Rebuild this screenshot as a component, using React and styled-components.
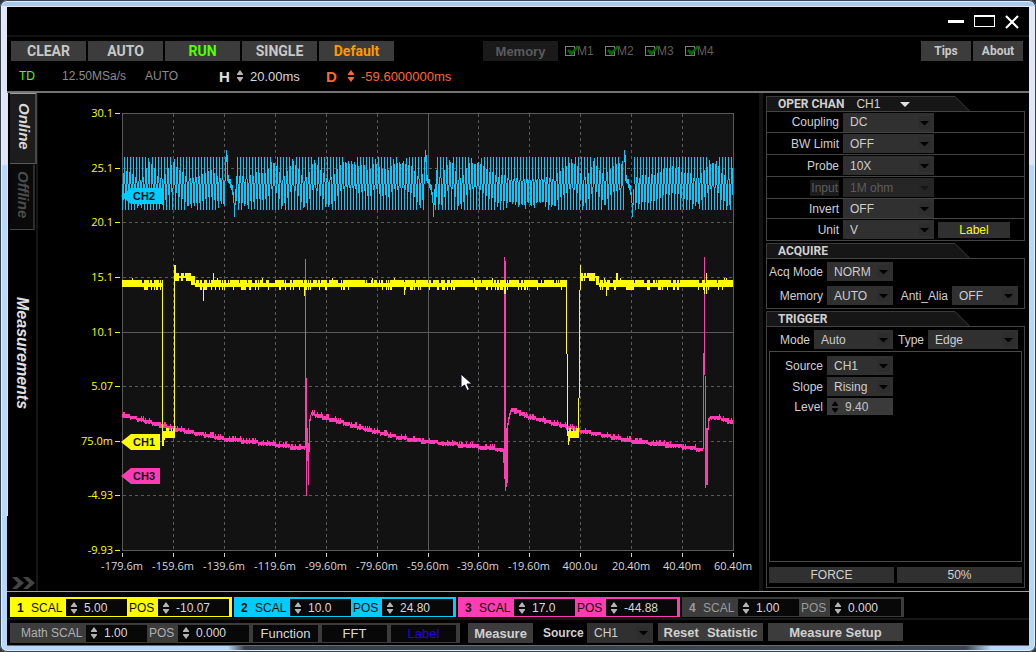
// App.jsx
import React, { useId } from "react";
import styled, { createGlobalStyle } from "styled-components";

const YELLOW = "#ffff00";
const CYAN = "#00ccff";
const PINK = "#ff3cb4";

/* ---------- waveform data ---------- */

const makeRandom = (seed) => {
  let s = seed;
  return () => {
    s = (s * 16807) % 2147483647;
    return s / 2147483647;
  };
};

// every column is [x, top, bottom] in plot pixels
const toPath = (columns) =>
  columns.map(([x, a, b]) => `M${x} ${a}h1V${b}h-1z`).join("");

const buildCh2 = () => {
  const rand = makeRandom(13);
  const glitch = [
    [37, 49],
    [42, 68],
    [62, 70],
    [66, 71],
    [66, 75],
    [71, 77],
    [72, 82],
    [79, 90],
    [90, 104],
    [76, 92],
  ];
  // one sample per column, joined at the midpoints between neighbours
  const samples = [];
  let phase = 0;
  for (let x = 0; x < 613; x++) {
    phase += (2 * Math.PI) / (3.07 + 0.09 * Math.sin(x / 23)) + (rand() - 0.5) * 0.22;
    const v = Math.max(-1, Math.min(1, 1.5 * Math.sin(phase)));
    samples.push(70.5 - v * 26.5);
  }
  const columns = [];
  for (let x = 0; x < 611; x++) {
    const start = [104, 303, 502].find((g) => x >= g && x < g + glitch.length);
    if (start !== undefined) {
      columns.push([x, ...glitch[x - start]]);
      continue;
    }
    const cur = samples[x + 1];
    const before = (samples[x] + cur) / 2;
    const after = (samples[x + 2] + cur) / 2;
    const top = Math.round(Math.min(cur, before, after));
    const bottom = Math.round(Math.max(cur, before, after));
    columns.push([x, top, Math.max(bottom, top + 4)]);
  }
  return toPath(columns);
};

const buildCh1 = () => {
  const rand = makeRandom(71);
  const fixed = {
    40: [167, 333],
    41: [318, 333],
    42: [318, 327],
    52: [152, 325],
    53: [152, 168],
    81: [170, 188],
    91: [160, 174],
    182: [167, 183],
    282: [169, 182],
    382: [167, 181],
    383: [167, 181],
    444: [167, 241],
    445: [241, 323],
    446: [318, 332],
    447: [315, 328],
    456: [285, 325],
    457: [177, 285],
    458: [152, 177],
    484: [169, 183],
    494: [160, 174],
    495: [160, 174],
    582: [167, 181],
    584: [160, 181],
  };
  const columns = [];
  let noisy = true;
  for (let x = 0; x < 611; x++) {
    if (x % 9 === 0) noisy = rand() > 0.5;
    const r = rand();
    if (fixed[x]) {
      columns.push([x, ...fixed[x]]);
    } else if ((x > 42 && x < 52) || (x > 447 && x < 456)) {
      columns.push([x, r > 0.6 ? 315 : 318, r > 0.3 ? 325 : 323]);
    } else if ((x > 53 && x < 69) || (x > 458 && x < 474)) {
      columns.push([x, r > 0.25 ? 160 : 163, r > 0.35 ? 168 : 165]);
    } else if ((x >= 69 && x < 73) || (x >= 474 && x < 477)) {
      columns.push([x, 163, 172]);
    } else if (noisy && r < 0.35) {
      columns.push([x, 170, 174]);
    } else if (noisy && r < 0.6) {
      columns.push([x, 167, 177]);
    } else if (r > 0.97) {
      columns.push([x, 165, 174]);
    } else {
      columns.push([x, 167, r > 0.9 ? 177 : 174]);
    }
  }
  return toPath(columns);
};

const buildCh3 = () => {
  const rand = makeRandom(29);
  const ramps = [
    [[0, 301], [51, 315], [102, 325], [153, 331], [183, 335]],
    [[189, 300], [200, 303], [238, 314], [278, 324], [306, 328], [356, 333], [381, 336]],
    [[389, 296], [394, 298], [406, 303], [444, 313], [458, 317], [509, 327], [560, 333], [581, 336]],
    [[588, 303], [596, 304], [611, 309]],
  ];
  const spikes = [
    [183, 146, 335], [184, 265, 383], [185, 315, 348], [186, 330, 372],
    [187, 306, 339], [188, 302, 308],
    [381, 336, 350], [382, 144, 366], [383, 148, 378], [384, 315, 374],
    [385, 310, 370], [386, 304, 312], [387, 300, 306], [388, 297, 302],
    [581, 240, 336], [582, 144, 262], [583, 263, 375], [584, 315, 372],
    [585, 315, 372], [586, 305, 317], [587, 304, 308],
  ];
  const columns = [...spikes];
  ramps.forEach((points) => {
    for (let i = 0; i < points.length - 1; i++) {
      const [x0, y0] = points[i];
      const [x1, y1] = points[i + 1];
      for (let x = x0; x < x1; x++) {
        const y = Math.round((y0 + ((y1 - y0) * (x - x0)) / (x1 - x0)) / 2) * 2;
        const r = rand();
        columns.push([x, y - (r > 0.7 ? 3 : 1), y + (r < 0.3 ? 2 : 3)]);
      }
    }
  });
  return toPath(columns);
};

const ch1Path = buildCh1();
const ch2Path = buildCh2();
const ch3Path = buildCh3();

const xTicks = [
  [0, "-179.6m"],
  [51, "-159.6m"],
  [102, "-139.6m"],
  [153, "-119.6m"],
  [204, "-99.60m"],
  [255, "-79.60m"],
  [306, "-59.60m"],
  [356, "-39.60m"],
  [407, "-19.60m"],
  [458, "400.0u"],
  [509, "20.40m"],
  [560, "40.40m"],
  [611, "60.40m"],
];

const yTicks = [
  [0, "30.1"],
  [55, "25.1"],
  [109, "20.1"],
  [164, "15.1"],
  [219, "10.1"],
  [273, "5.07"],
  [328, "75.0m"],
  [382, "-4.93"],
  [437, "-9.93"],
];

const markers = [
  { name: "CH2", y: 75, width: 40, color: CYAN },
  { name: "CH1", y: 321, width: 38, color: YELLOW },
  { name: "CH3", y: 355, width: 38, color: PINK },
];

/* ---------- small parts ---------- */

const Arrows = ({ color = "#b4b4b4" }) => (
  <svg width="6" height="12" viewBox="0 0 6 12" fill={color} aria-hidden="true">
    <path d="M3 0L6 4V5H0V4zM0 7H6V8L3 12L0 8z" />
  </svg>
);

const Spinner = ({ label, value, width, arrows, tone, size }) => (
  <SpinnerBox $width={width} $tone={tone}>
    <Arrows color={arrows} />
    <SpinnerInput aria-label={label} defaultValue={value} $tone={tone} $size={size} />
  </SpinnerBox>
);

const Select = ({ id, label, value, width, disabled, height }) => (
  <SelectWrap $width={width} $height={height}>
    <SelectBox id={id} aria-label={label} defaultValue={value} disabled={disabled}>
      <option>{value}</option>
    </SelectBox>
    <SelectCaret viewBox="0 0 13 13" aria-hidden="true">
      <rect width="13" height="13" fill={disabled ? "#252525" : "#2d2d2d"} />
      <path d="M2 5H11L7 9H6z" fill={disabled ? "#161616" : "#000"} />
    </SelectCaret>
  </SelectWrap>
);

const Field = ({ label, labelWidth, ...rest }) => {
  const id = useId();
  return (
    <>
      <FieldLabel htmlFor={id} $width={labelWidth}>
        {rest.disabled ? <Dimmed>{label}</Dimmed> : label}
      </FieldLabel>
      <Select id={id} {...rest} />
    </>
  );
};

const SectionHeader = ({ title, children }) => (
  <Header>
    <HeaderShape viewBox="0 0 204 15" aria-hidden="true">
      <path d="M.5 15V.5H189L203.500 15" fill="#161616" stroke="#3a3a3a" />
    </HeaderShape>
    <HeaderTitle>{title}</HeaderTitle>
    {children}
  </Header>
);

const Channel = ({ number, color, text, scale, position }) => (
  <Group $color={color} $text={text}>
    <GroupNumber>{number}</GroupNumber>
    <GroupLabel $width={35}>SCAL</GroupLabel>
    <Spinner label={`Channel ${number} scale`} value={scale} width={61} />
    <GroupLabel $width={31} $inset>
      POS
    </GroupLabel>
    <Spinner label={`Channel ${number} position`} value={position} width={71} />
  </Group>
);

const Scope = () => (
  <ScopeSvg viewBox="0 0 721 484" preserveAspectRatio="xMinYMin meet" role="img" aria-label="Waveforms">
    <g transform="translate(84 20)">
      <rect width="611" height="437" fill="#121212" />
      <g stroke="#5a5a5a" shapeRendering="crispEdges">
        {xTicks.slice(1, -1).map(([x]) => (
          <path key={x} d={`M${x + 0.5} 1V437`} strokeDasharray={x === 306 ? "none" : "3 3"} />
        ))}
        {yTicks.slice(1, -1).map(([y]) => (
          <path key={y} d={`M1 ${y + 0.5}H611`} strokeDasharray={y === 219 ? "none" : "3 3"} />
        ))}
        <rect x=".5" y=".5" width="611" height="437" fill="none" />
      </g>
      <g shapeRendering="crispEdges">
        <path d={ch2Path} fill={CYAN} />
        <path d={ch3Path} fill={PINK} />
        <path d={ch1Path} fill={YELLOW} />
      </g>
      {yTicks.map(([y, text]) => (
        <g key={text}>
          <AxisText x="-9" y={y + 4} textAnchor="end" fill={YELLOW}>
            {text}
          </AxisText>
          <rect x="-7" y={y} width="5" height="1" fill={YELLOW} />
        </g>
      ))}
      {xTicks.map(([x, text]) => (
        <g key={text}>
          <rect x={x} y="440" width="1" height="4" fill="#d0d0d0" />
          <AxisText x={x} y="457" textAnchor="middle" fill="#d8d8d8">
            {text}
          </AxisText>
        </g>
      ))}
      {markers.map(({ name, y, width, color }) => (
        <g key={name} transform={`translate(0 ${y})`}>
          <path d={`M-1 8L9 0H${width}V16H9z`} fill={color} />
          <MarkerText x="11" y="12">
            {name}
          </MarkerText>
        </g>
      ))}
      <path
        transform="translate(338 260)"
        d="M1 1V15L4.500 12L7 17.500L9.500 16.500L7 11H12z"
        fill="#fff"
        stroke="#0a0a20"
      />
    </g>
  </ScopeSvg>
);

const App = () => (
  <>
    <GlobalStyle />
    <Frame>
      <Screen>
        <TitleBar>
          <WindowButton aria-label="Minimize">
            <svg width="16" height="15" viewBox="0 0 16 15">
              <path d="M0 6H16V9H0z" fill="#fff" />
            </svg>
          </WindowButton>
          <WindowButton aria-label="Maximize">
            <svg width="21" height="15" viewBox="0 0 21 15" shapeRendering="crispEdges">
              <path d="M0 1H21V13H0zM1 3V12H20V3z" fill="#fff" fillRule="evenodd" />
            </svg>
          </WindowButton>
          <WindowButton aria-label="Close">
            <svg width="14" height="15" viewBox="0 0 14 15">
              <path d="M1 2L13 14M13 2L1 14" stroke="#fff" strokeWidth="2.200" />
            </svg>
          </WindowButton>
        </TitleBar>

        <Toolbar>
          <ButtonRow>
            <ToolButton>CLEAR</ToolButton>
            <ToolButton>AUTO</ToolButton>
            <ToolButton $color="#55ff00">RUN</ToolButton>
            <ToolButton>SINGLE</ToolButton>
            <ToolButton $color="#ff9900">Default</ToolButton>
            <MemoryGroup>
              <MemoryButton disabled>Memory</MemoryButton>
              {["M1", "M2", "M3", "M4"].map((name) => (
                <CheckLabel key={name}>
                  <CheckInput type="checkbox" defaultChecked disabled />
                  <CheckMark viewBox="0 0 13 11" aria-hidden="true">
                    <path d="M1 5L4.500 8.500L11 1" fill="none" stroke="#006a00" strokeWidth="2.600" />
                  </CheckMark>
                  {name}
                </CheckLabel>
              ))}
            </MemoryGroup>
            <HelpGroup>
              <SmallButton>Tips</SmallButton>
              <SmallButton>About</SmallButton>
            </HelpGroup>
          </ButtonRow>
          <StatusRow>
            <StatusText $width={43} $color="#55ff00">
              TD
            </StatusText>
            <StatusText $width={83}>12.50MSa/s</StatusText>
            <StatusText $width={74}>AUTO</StatusText>
            <AxisKey>H</AxisKey>
            <Spinner label="Horizontal scale" value="20.00ms" width={89} tone="bare" size={13} />
            <AxisKey $color="#ff6633" $wide>
              D
            </AxisKey>
            <Spinner label="Delay" value="-59.6000000ms" width={120} arrows="#ff6633" tone="delay" size={13} />
          </StatusRow>
        </Toolbar>

        <Main>
          <SideBar>
            <SideTab $active>Online</SideTab>
            <SideTab>Offline</SideTab>
            <SideTitle>Measurements</SideTitle>
            <ExpandButton aria-label="Expand">
              <svg width="24" height="12" viewBox="0 0 24 12" fill="#444">
                <path d="M0 0H5L12 6L5 12H0L6 6zM11 0H16L23 6L16 12H11L17 6z" />
              </svg>
            </ExpandButton>
          </SideBar>

          <ScopePane>
            <Scope />
          </ScopePane>

          <Panel>
            <SectionHeader title="OPER CHAN">
              <ChannelSelect>
                <select aria-label="Channel" defaultValue="CH1">
                  <option>CH1</option>
                </select>
                <svg width="10" height="5" viewBox="0 0 10 5" aria-hidden="true">
                  <path d="M0 0H10L5 5z" fill="#e0e0e0" />
                </svg>
              </ChannelSelect>
            </SectionHeader>
            <ChannelRows>
              <ChannelRow>
                <Field label="Coupling" labelWidth={72} value="DC" width={91} />
              </ChannelRow>
              <ChannelRow>
                <Field label="BW Limit" labelWidth={72} value="OFF" width={91} />
              </ChannelRow>
              <ChannelRow>
                <Field label="Probe" labelWidth={72} value="10X" width={91} />
              </ChannelRow>
              <ChannelRow>
                <Field label="Input" labelWidth={72} value="1M ohm" width={91} disabled />
              </ChannelRow>
              <ChannelRow>
                <Field label="Invert" labelWidth={72} value="OFF" width={91} />
              </ChannelRow>
              <ChannelRow>
                <Field label="Unit" labelWidth={72} value="V" width={91} />
                <LabelButton>Label</LabelButton>
              </ChannelRow>
            </ChannelRows>

            <SectionHeader title="ACQUIRE" />
            <AcquireBody>
              <PanelRow>
                <Field label="Acq Mode" labelWidth={56} value="NORM" width={66} />
              </PanelRow>
              <PanelRow>
                <Field label="Memory" labelWidth={56} value="AUTO" width={66} />
                <Field label="Anti_Alia" labelWidth={51} value="OFF" width={66} />
              </PanelRow>
            </AcquireBody>

            <SectionHeader title="TRIGGER" />
            <TriggerBody>
              <PanelRow>
                <Field label="Mode" labelWidth={41} value="Auto" width={79} />
                <Field label="Type" labelWidth={27} value="Edge" width={90} />
              </PanelRow>
              <TriggerBox>
                <PanelRow>
                  <Field label="Source" labelWidth={53} value="CH1" width={66} />
                </PanelRow>
                <PanelRow>
                  <Field label="Slope" labelWidth={53} value="Rising" width={66} />
                </PanelRow>
                <PanelRow>
                  <FieldLabel as="span" $width={53}>
                    Level
                  </FieldLabel>
                  <Spinner label="Level" value="9.40" width={66} arrows="#000" tone="raised" />
                </PanelRow>
              </TriggerBox>
              <TriggerActions>
                <TriggerButton>FORCE</TriggerButton>
                <TriggerButton>50%</TriggerButton>
              </TriggerActions>
            </TriggerBody>
          </Panel>
        </Main>

        <Footer>
          <FooterRow>
            <Channel number={1} color={YELLOW} scale="5.00" position="-10.07" />
            <Channel number={2} color={CYAN} scale="10.0" position="24.80" />
            <Channel number={3} color={PINK} scale="17.0" position="-44.88" />
            <Channel number={4} color="#3c3c3c" text="#9a9a9a" scale="1.00" position="0.000" />
          </FooterRow>
          <FooterLine />
          <FooterRow>
            <MathGroup>
              <GroupLabel $width={65}>Math SCAL</GroupLabel>
              <Spinner label="Math scale" value="1.00" width={61} />
              <GroupLabel $width={31} $inset>
                POS
              </GroupLabel>
              <Spinner label="Math position" value="0.000" width={71} />
              <MathButtons>
                <MathButton>Function</MathButton>
                <MathButton>FFT</MathButton>
                <MathButton $color="#2a00e6">Label</MathButton>
              </MathButtons>
            </MathGroup>
            <MeasureGroup>
              <MeasureButton $width={65} $tall>
                Measure
              </MeasureButton>
              <SourceLabel htmlFor="measure-source">Source</SourceLabel>
              <Select id="measure-source" value="CH1" width={66} height={20} />
              <MeasureButton $width={105}>
                <span>Reset</span>
                <span>Statistic</span>
              </MeasureButton>
              <MeasureButton $width={135}>Measure Setup</MeasureButton>
            </MeasureGroup>
          </FooterRow>
        </Footer>
      </Screen>
    </Frame>
  </>
);

export default App;

/* ---------- styles ---------- */

const GlobalStyle = createGlobalStyle`
  * {
    box-sizing: border-box;
  }

  body {
    margin: 0;
    background: #2c3440;
    font-family: "Liberation Sans", Arial, sans-serif;
    font-size: 12px;
    color: #d0d0d0;
  }

  button,
  input,
  select {
    margin: 0;
    padding: 0;
    border: 0;
    border-radius: 0;
    font: inherit;
    color: inherit;
    background: none;
  }

  svg {
    display: block;
    flex-shrink: 0;
  }
`;

const Frame = styled.div`
  display: flex;
  min-height: 100vh;
  padding: 7px 7px 6px;
  border-radius: 7px;
  background:
    linear-gradient(90deg, transparent 228px, #343d4c 245px, #3c4656 calc(100% - 70px), transparent calc(100% - 45px))
      0 calc(100% - 2px) / 100% 4px no-repeat,
    linear-gradient(#a9c9ea, #a9c9ea) top / 100% 6px no-repeat,
    linear-gradient(180deg, #e2e8f4 0, #dfe6f6 164px, #b5d8fb 166px, #b5d8fb 100%);
  box-shadow:
    inset 0 0 0 1px #39424f,
    inset 0 0 0 2px #e4eef8;
`;

const Screen = styled.div`
  flex: 1;
  min-width: 0;
  display: flex;
  flex-direction: column;
  background: #000;
`;

const TitleBar = styled.header`
  display: flex;
  align-items: center;
  justify-content: flex-end;
  gap: 10px;
  height: 30px;
  padding-right: 10px;
  border-bottom: 2px solid #141414;
`;

const WindowButton = styled.button`
  display: flex;
`;

const Toolbar = styled.div`
  padding-top: 4px;
  border-bottom: 2px solid #747474;
`;

const ButtonRow = styled.div`
  display: flex;
  gap: 2px;
  padding: 0 6px 0 4px;
`;

const ToolButton = styled.button`
  width: 75px;
  height: 20px;
  font-family: Roboto, sans-serif;
  font-size: 14px;
  font-weight: 700;
  line-height: 20px;
  background: #3c3c3c;
  color: ${(props) => props.$color || "#c8c8c8"};
`;

const MemoryGroup = styled.div`
  display: flex;
  align-items: center;
  gap: 7px;
  margin-left: 87px;
`;

const MemoryButton = styled.button`
  width: 75px;
  height: 20px;
  font-size: 13px;
  font-weight: 700;
  background: #1a1a1a;
  color: #5a5a5a;
`;

const CheckLabel = styled.label`
  position: relative;
  display: flex;
  align-items: center;
  gap: 2px;
  width: 33px;
  height: 20px;
  color: #5f5f5f;
`;

const CheckInput = styled.input`
  appearance: none;
  flex-shrink: 0;
  width: 10px;
  height: 10px;
  border: 1px solid #808080;
`;

const CheckMark = styled.svg`
  position: absolute;
  left: 2px;
  top: 4px;
  width: 13px;
  height: 11px;
`;

const HelpGroup = styled.div`
  display: flex;
  gap: 2px;
  margin-left: auto;
`;

const SmallButton = styled(ToolButton)`
  width: 50px;
  font-size: 12px;
`;

const StatusRow = styled.div`
  display: flex;
  align-items: center;
  height: 30px;
  padding-left: 12px;
`;

const StatusText = styled.span`
  width: ${(props) => props.$width}px;
  color: ${(props) => props.$color || "#8c8c8c"};
`;

const AxisKey = styled.span`
  width: ${(props) => (props.$wide ? 22 : 18)}px;
  font-size: 15px;
  font-weight: 700;
  color: ${(props) => props.$color || "#e0e0e0"};
`;

const spinnerTones = {
  field: { background: "#080808", color: "#d8d8d8", inset: 5 },
  bare: { background: "none", color: "#d8d8d8", inset: 0 },
  delay: { background: "none", color: "#ff6633", inset: 0 },
  raised: { background: "#3a3a3a", color: "#c4c4c4", inset: 5 },
};

const tone = (props) => spinnerTones[props.$tone || "field"];

const SpinnerBox = styled.div`
  display: flex;
  align-items: center;
  gap: 7px;
  flex-shrink: 0;
  width: ${(props) => props.$width}px;
  height: 17px;
  padding-left: ${(props) => tone(props).inset}px;
  background: ${(props) => tone(props).background};
`;

const SpinnerInput = styled.input`
  flex: 1;
  min-width: 0;
  font-size: ${(props) => props.$size || 12}px;
  color: ${(props) => tone(props).color};
`;

const Main = styled.main`
  flex: 1;
  display: flex;
  min-height: 0;
`;

const SideBar = styled.nav`
  display: flex;
  flex-direction: column;
  width: 31px;
  padding-left: 3px;
  border-right: 2px solid #161616;
  background: linear-gradient(${YELLOW}, ${YELLOW}) left top / 1px 85% no-repeat;
`;

const SideTab = styled.button`
  width: ${(props) => (props.$active ? 27 : 25)}px;
  height: ${(props) => (props.$active ? 71 : 66)}px;
  padding: 0 0 4px 4px;
  writing-mode: vertical-rl;
  font-size: 15px;
  font-style: italic;
  font-weight: 700;
  text-align: center;
  background: ${(props) => (props.$active ? "#1c1c1c" : "#0a0a0a")};
  color: ${(props) => (props.$active ? "#d8d8d8" : "#4c4c4c")};
  border-top: 1px solid ${(props) => (props.$active ? "#a0a0a0" : "#0a0a0a")};
  border-right: 2px solid ${(props) => (props.$active ? "#484848" : "#2c2c2c")};
  border-bottom: 1px solid ${(props) => (props.$active ? "#5a5a5a" : "#444")};
`;

const SideTitle = styled.div`
  align-self: flex-start;
  margin-top: 67px;
  margin-left: 2px;
  writing-mode: vertical-rl;
  font-size: 16px;
  line-height: 20px;
  font-style: italic;
  font-weight: 700;
  color: #e0e0e0;
`;

const ExpandButton = styled.button`
  margin-top: auto;
  padding: 0 0 2px 2px;
`;

const ScopePane = styled.section`
  flex: 1;
  min-width: 0;
`;

const ScopeSvg = styled.svg`
  width: 100%;
  height: auto;
`;

const AxisText = styled.text`
  font-family: "Open Sans", sans-serif;
  font-size: 11px;
`;

const MarkerText = styled.text`
  font-size: 11px;
  font-weight: 700;
  fill: #101020;
`;

const Panel = styled.aside`
  display: flex;
  flex-direction: column;
  width: 270px;
  padding: 3px 4px 3px 3px;
  border-left: 4px solid #121212;
`;

const Header = styled.div`
  position: relative;
  display: flex;
  align-items: center;
  height: 15px;
  padding-top: 1px;
  padding-left: 12px;
`;

const HeaderShape = styled.svg`
  position: absolute;
  left: 0;
  top: 0;
  width: 204px;
  height: 15px;
`;

const HeaderTitle = styled.h2`
  position: relative;
  margin: 0;
  font-family: Roboto, sans-serif;
  font-size: 12px;
  line-height: 14px;
  font-weight: 700;
  color: #d0d0d0;
`;

const ChannelSelect = styled.div`
  position: relative;
  display: flex;
  align-items: center;
  height: 12px;
  margin-left: 12px;

  select {
    appearance: none;
    width: 56px;
    height: 12px;
    margin-right: -12px;
    line-height: 12px;
  }
`;

const ChannelRows = styled.div`
  display: grid;
  grid-template-rows: 21px 22px 22px 22px 20px 22px;
  margin-bottom: 2px;
  border: 1px solid #444;
  border-bottom: 0;
`;

const ChannelRow = styled.div`
  display: flex;
  align-items: center;
  gap: 4px;
  border-bottom: 1px solid #444;
`;

const FieldLabel = styled.label`
  flex-shrink: 0;
  width: ${(props) => props.$width}px;
  text-align: right;
  line-height: 16px;
  white-space: nowrap;
  color: #d0d0d0;
`;

const Dimmed = styled.span`
  display: inline-block;
  padding: 0 1px;
  background: #1c1c1c;
  color: #5c5c5c;
`;

const SelectWrap = styled.div`
  position: relative;
  flex-shrink: 0;
  width: ${(props) => props.$width}px;
  height: ${(props) => props.$height || 19}px;
`;

const SelectBox = styled.select`
  appearance: none;
  width: 100%;
  height: 100%;
  padding-left: 7px;
  background: #303030;
  color: #cdcdcd;

  &:disabled {
    opacity: 1;
    background: #262626;
    color: #5c5c5c;
  }
`;

const SelectCaret = styled.svg`
  position: absolute;
  right: 3px;
  top: 3px;
  width: 13px;
  height: 13px;
  pointer-events: none;
`;

const LabelButton = styled.button`
  width: 72px;
  height: 16px;
  line-height: 16px;
  background: #303030;
  color: ${YELLOW};
`;

const AcquireBody = styled.div`
  display: flex;
  flex-direction: column;
  gap: 5px;
  margin-bottom: 2px;
  padding: 3px 0;
  border: 1px solid #444;
`;

const PanelRow = styled.div`
  display: flex;
  align-items: center;
  gap: 4px;
`;

const TriggerBody = styled.div`
  flex: 1;
  display: flex;
  flex-direction: column;
  padding: 3px 2px 4px;
  border: 1px solid #444;
`;

const TriggerBox = styled.div`
  flex: 1;
  display: flex;
  flex-direction: column;
  gap: 2px;
  margin: 2px 0 5px;
  padding-top: 4px;
  border: 1px solid #4a4a4a;
`;

const TriggerActions = styled.div`
  display: flex;
  gap: 3px;
`;

const TriggerButton = styled.button`
  flex: 1;
  height: 16px;
  line-height: 16px;
  background: #303030;
`;

const Footer = styled.footer`
  padding: 5px 0 2px;
  border-top: 1px solid #a0a0a0;
  border-bottom: 1px solid #6c6c6c;
`;

const FooterRow = styled.div`
  display: flex;
  gap: 2px;
  padding-left: 3px;
`;

const FooterLine = styled.div`
  height: 2px;
  margin: 1px 0 3px;
  background: #161616;
`;

const Group = styled.div`
  display: flex;
  align-items: center;
  height: 20px;
  padding: 1px 3px 0 7px;
  background: ${(props) => props.$color};
  color: ${(props) => props.$text || "#101000"};
`;

const GroupNumber = styled.span`
  width: 14px;
  font-weight: 700;
`;

const GroupLabel = styled.span`
  width: ${(props) => props.$width}px;
  padding-left: ${(props) => (props.$inset ? 2 : 0)}px;
  white-space: nowrap;
`;

const MathGroup = styled.div`
  display: flex;
  align-items: center;
  height: 20px;
  padding: 0 4px 0 11px;
  background: #3c3c3c;
  color: #b0b0b0;
`;

const MathButtons = styled.div`
  display: flex;
  gap: 4px;
  margin-left: 4px;
`;

const MathButton = styled.button`
  width: 65px;
  height: 17px;
  font-size: 13px;
  line-height: 17px;
  background: #080808;
  color: ${(props) => props.$color || "#d8d8d8"};
`;

const MeasureGroup = styled.div`
  display: flex;
  align-items: flex-start;
  gap: 5px;
  margin-left: 6px;
`;

const MeasureButton = styled.button`
  display: flex;
  align-items: center;
  justify-content: center;
  gap: 8px;
  width: ${(props) => props.$width}px;
  height: ${(props) => (props.$tall ? 20 : 18)}px;
  font-size: 13px;
  font-weight: 700;
  background: #3c3c3c;
  color: #d0d0d0;
`;

const SourceLabel = styled.label`
  width: 39px;
  margin-left: 5px;
  line-height: 20px;
  font-weight: 700;
`;
